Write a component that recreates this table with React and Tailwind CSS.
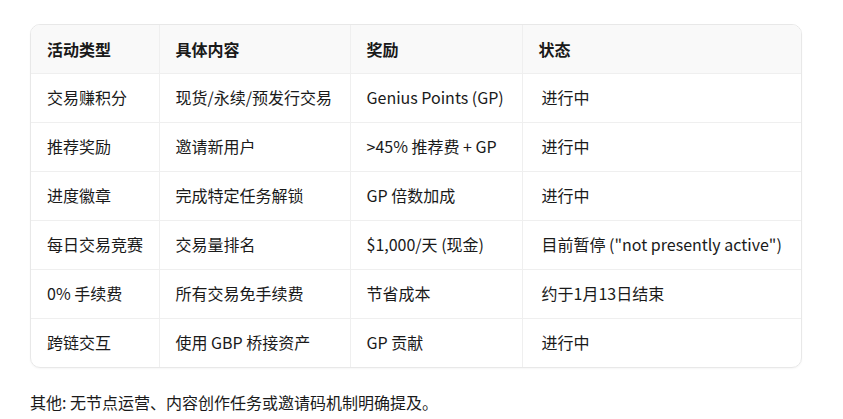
import React from 'react';

const rows = [
    ['交易赚积分', '现货/永续/预发行交易', 'Genius Points (GP)', '进行中'],
    ['推荐奖励', '邀请新用户', '>45% 推荐费 + GP', '进行中'],
    ['进度徽章', '完成特定任务解锁', 'GP 倍数加成', '进行中'],
    ['每日交易竞赛', '交易量排名', '$1,000/天 (现金)', '目前暂停 ("not presently active")'],
    ['0% 手续费', '所有交易免手续费', '节省成本', '约于1月13日结束'],
    ['跨链交互', '使用 GBP 桥接资产', 'GP 贡献', '进行中'],
];

const headers = ['活动类型', '具体内容', '奖励', '状态'];

const App = () => {
    return (
        <div className="w-[843px] h-[419px] bg-white text-[#1a1a1a] pt-6 px-[30px] font-['Noto_Sans_CJK_SC','Noto_Sans',sans-serif] text-[16px] overflow-hidden">
            <div className="w-[772px] border border-[#e8e8e8] rounded-[10px] overflow-hidden shadow-[0_1px_2px_rgba(0,0,0,0.04)]">
                <table className="w-full border-collapse table-fixed">
                    <colgroup>
                        <col className="w-[128px]" />
                        <col className="w-[191px]" />
                        <col className="w-[172px]" />
                        <col />
                    </colgroup>
                    <thead>
                        <tr className="bg-[#f9f9f9] h-[48px]">
                            {headers.map((h, i) => (
                                <th
                                    key={h}
                                    className={`text-left font-bold px-4 ${i > 0 ? 'border-l border-[#efefef]' : ''}`}
                                >
                                    {h}
                                </th>
                            ))}
                        </tr>
                    </thead>
                    <tbody>
                        {rows.map((r, ri) => (
                            <tr key={ri} className="h-[49px] border-t border-[#efefef]">
                                {r.map((c, ci) => (
                                    <td
                                        key={ci}
                                        className={`whitespace-nowrap pb-[2px] ${ci === 3 ? 'pl-[19px] pr-4' : 'px-4'} ${ci > 0 ? 'border-l border-[#efefef]' : ''}`}
                                    >
                                        {c}
                                    </td>
                                ))}
                            </tr>
                        ))}
                    </tbody>
                </table>
            </div>
            <p className="mt-[22px]">其他: 无节点运营、内容创作任务或邀请码机制明确提及。</p>
        </div>
    );
};

export default App;
